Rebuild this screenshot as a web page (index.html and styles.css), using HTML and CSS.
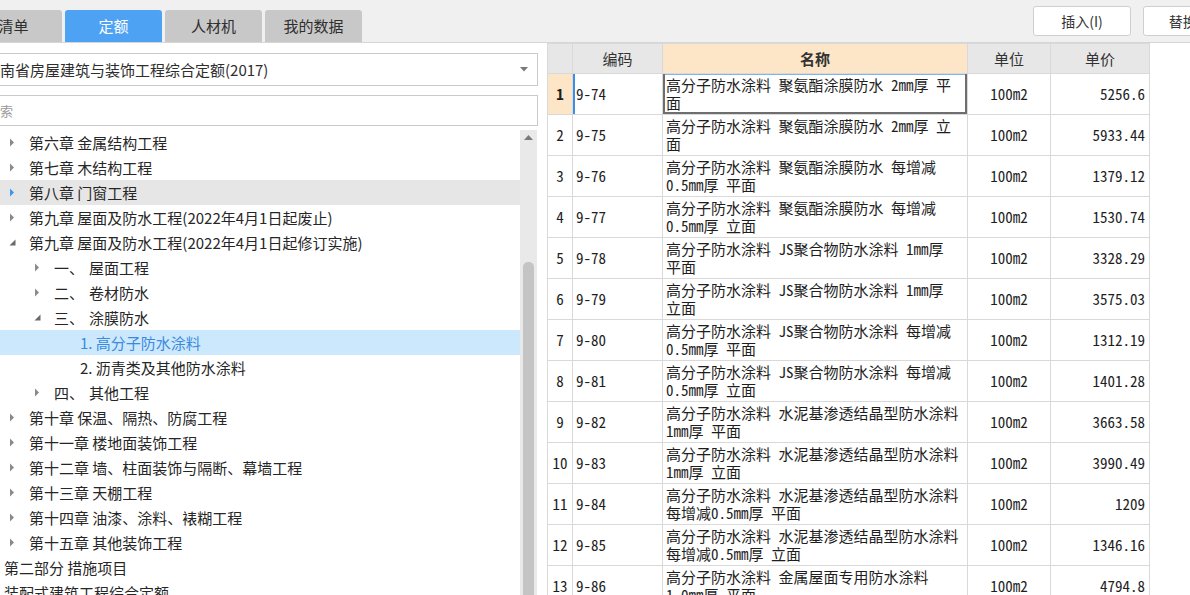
FILE: index.html
```html
<!DOCTYPE html>
<html lang="zh-CN">
<head>
<meta charset="utf-8">
<title>定额</title>
<link rel="stylesheet" href="styles.css">
</head>
<body>
<div class="app">
  <header class="topbar">
    <nav class="tabs">
      <div class="tab">清单</div>
      <div class="tab active">定额</div>
      <div class="tab">人材机</div>
      <div class="tab">我的数据</div>
    </nav>
    <div class="actions">
      <button class="btn">插入(I)</button>
      <button class="btn">替换(R)</button>
    </div>
  </header>
  <main class="main">
    <section class="left">
      <div class="select">
        <span class="select-text">湖南省房屋建筑与装饰工程综合定额(2017)</span>
        <svg class="caret" width="8" height="5" viewBox="0 0 8 5"><path d="M0 0H8L4 4.5Z" fill="#7a7a7a"/></svg>
      </div>
      <div class="search">搜索</div>
      <div class="tree-wrap">
        <ul class="tree">
          <li class="row l1"><span class="tw"><svg width="6" height="9" viewBox="0 0 6 9"><path d="M1 0.5L5 4.5L1 8.5Z" fill="#8a8a8a"/></svg></span>第六章 金属结构工程</li>
          <li class="row l1"><span class="tw"><svg width="6" height="9" viewBox="0 0 6 9"><path d="M1 0.5L5 4.5L1 8.5Z" fill="#8a8a8a"/></svg></span>第七章 木结构工程</li>
          <li class="row l1 hover"><span class="tw"><svg width="6" height="9" viewBox="0 0 6 9"><path d="M1 0.5L5 4.5L1 8.5Z" fill="#3d96f2"/></svg></span>第八章 门窗工程</li>
          <li class="row l1"><span class="tw"><svg width="6" height="9" viewBox="0 0 6 9"><path d="M1 0.5L5 4.5L1 8.5Z" fill="#8a8a8a"/></svg></span>第九章 屋面及防水工程(2022年4月1日起废止)</li>
          <li class="row l1"><span class="tw"><svg width="7" height="7" viewBox="0 0 7 7"><path d="M6.5 0.5V6.5H0.5Z" fill="#6a6a6a"/></svg></span>第九章 屋面及防水工程(2022年4月1日起修订实施)</li>
          <li class="row l2"><span class="tw"><svg width="6" height="9" viewBox="0 0 6 9"><path d="M1 0.5L5 4.5L1 8.5Z" fill="#8a8a8a"/></svg></span><span class="num">一、</span>屋面工程</li>
          <li class="row l2"><span class="tw"><svg width="6" height="9" viewBox="0 0 6 9"><path d="M1 0.5L5 4.5L1 8.5Z" fill="#8a8a8a"/></svg></span><span class="num">二、</span>卷材防水</li>
          <li class="row l2"><span class="tw"><svg width="7" height="7" viewBox="0 0 7 7"><path d="M6.5 0.5V6.5H0.5Z" fill="#6a6a6a"/></svg></span><span class="num">三、</span>涂膜防水</li>
          <li class="row l3 selected"><span class="tw"></span>1. 高分子防水涂料</li>
          <li class="row l3"><span class="tw"></span>2. 沥青类及其他防水涂料</li>
          <li class="row l2"><span class="tw"><svg width="6" height="9" viewBox="0 0 6 9"><path d="M1 0.5L5 4.5L1 8.5Z" fill="#8a8a8a"/></svg></span><span class="num">四、</span>其他工程</li>
          <li class="row l1"><span class="tw"><svg width="6" height="9" viewBox="0 0 6 9"><path d="M1 0.5L5 4.5L1 8.5Z" fill="#8a8a8a"/></svg></span>第十章 保温、隔热、防腐工程</li>
          <li class="row l1"><span class="tw"><svg width="6" height="9" viewBox="0 0 6 9"><path d="M1 0.5L5 4.5L1 8.5Z" fill="#8a8a8a"/></svg></span>第十一章 楼地面装饰工程</li>
          <li class="row l1"><span class="tw"><svg width="6" height="9" viewBox="0 0 6 9"><path d="M1 0.5L5 4.5L1 8.5Z" fill="#8a8a8a"/></svg></span>第十二章 墙、柱面装饰与隔断、幕墙工程</li>
          <li class="row l1"><span class="tw"><svg width="6" height="9" viewBox="0 0 6 9"><path d="M1 0.5L5 4.5L1 8.5Z" fill="#8a8a8a"/></svg></span>第十三章 天棚工程</li>
          <li class="row l1"><span class="tw"><svg width="6" height="9" viewBox="0 0 6 9"><path d="M1 0.5L5 4.5L1 8.5Z" fill="#8a8a8a"/></svg></span>第十四章 油漆、涂料、裱糊工程</li>
          <li class="row l1"><span class="tw"><svg width="6" height="9" viewBox="0 0 6 9"><path d="M1 0.5L5 4.5L1 8.5Z" fill="#8a8a8a"/></svg></span>第十五章 其他装饰工程</li>
          <li class="row l0"><span class="tw"></span>第二部分 措施项目</li>
          <li class="row l0"><span class="tw"></span>装配式建筑工程综合定额</li>
        </ul>
        <div class="scrollbar">
          <svg class="sb-up" width="9" height="5" viewBox="0 0 9 5"><path d="M0 5L4.5 0L9 5Z" fill="#7a7a7a"/></svg>
          <div class="sb-thumb"></div>
        </div>
      </div>
    </section>
    <section class="right">
      <table class="grid">
        <colgroup>
          <col class="c-no"><col class="c-code"><col class="c-name"><col class="c-unit"><col class="c-price">
        </colgroup>
        <thead>
          <tr><th></th><th>编码</th><th class="name-h">名称</th><th>单位</th><th>单价</th></tr>
        </thead>
        <tbody>
          <tr class="current"><td class="no">1</td><td class="code">9-74</td><td class="name">高分子防水涂料 聚氨酯涂膜防水 2mm厚 平<br>面</td><td class="unit">100m2</td><td class="price">5256.6</td></tr>
          <tr><td class="no">2</td><td class="code">9-75</td><td class="name">高分子防水涂料 聚氨酯涂膜防水 2mm厚 立<br>面</td><td class="unit">100m2</td><td class="price">5933.44</td></tr>
          <tr><td class="no">3</td><td class="code">9-76</td><td class="name">高分子防水涂料 聚氨酯涂膜防水 每增减<br>0.5mm厚 平面</td><td class="unit">100m2</td><td class="price">1379.12</td></tr>
          <tr><td class="no">4</td><td class="code">9-77</td><td class="name">高分子防水涂料 聚氨酯涂膜防水 每增减<br>0.5mm厚 立面</td><td class="unit">100m2</td><td class="price">1530.74</td></tr>
          <tr><td class="no">5</td><td class="code">9-78</td><td class="name">高分子防水涂料 JS聚合物防水涂料 1mm厚<br>平面</td><td class="unit">100m2</td><td class="price">3328.29</td></tr>
          <tr><td class="no">6</td><td class="code">9-79</td><td class="name">高分子防水涂料 JS聚合物防水涂料 1mm厚<br>立面</td><td class="unit">100m2</td><td class="price">3575.03</td></tr>
          <tr><td class="no">7</td><td class="code">9-80</td><td class="name">高分子防水涂料 JS聚合物防水涂料 每增减<br>0.5mm厚 平面</td><td class="unit">100m2</td><td class="price">1312.19</td></tr>
          <tr><td class="no">8</td><td class="code">9-81</td><td class="name">高分子防水涂料 JS聚合物防水涂料 每增减<br>0.5mm厚 立面</td><td class="unit">100m2</td><td class="price">1401.28</td></tr>
          <tr><td class="no">9</td><td class="code">9-82</td><td class="name">高分子防水涂料 水泥基渗透结晶型防水涂料<br>1mm厚 平面</td><td class="unit">100m2</td><td class="price">3663.58</td></tr>
          <tr><td class="no">10</td><td class="code">9-83</td><td class="name">高分子防水涂料 水泥基渗透结晶型防水涂料<br>1mm厚 立面</td><td class="unit">100m2</td><td class="price">3990.49</td></tr>
          <tr><td class="no">11</td><td class="code">9-84</td><td class="name">高分子防水涂料 水泥基渗透结晶型防水涂料<br>每增减0.5mm厚 平面</td><td class="unit">100m2</td><td class="price">1209</td></tr>
          <tr><td class="no">12</td><td class="code">9-85</td><td class="name">高分子防水涂料 水泥基渗透结晶型防水涂料<br>每增减0.5mm厚 立面</td><td class="unit">100m2</td><td class="price">1346.16</td></tr>
          <tr><td class="no">13</td><td class="code">9-86</td><td class="name">高分子防水涂料 金属屋面专用防水涂料<br>1.0mm厚 平面</td><td class="unit">100m2</td><td class="price">4794.8</td></tr>
        </tbody>
      </table>
    </section>
  </main>
</div>
</body>
</html>
```

FILE: styles.css
```css
* { box-sizing: border-box; }
html, body { margin: 0; padding: 0; }
body {
  width: 1190px;
  height: 595px;
  overflow: hidden;
  background: #ffffff;
  font-family: "Noto Sans CJK SC", "Microsoft YaHei", sans-serif;
  color: #333333;
}
.app {
  width: 1190px;
  height: 595px;
  display: flex;
  flex-direction: column;
  overflow: hidden;
}

/* top bar */
.topbar {
  flex: none;
  height: 43px;
  display: flex;
  align-items: flex-start;
  background: #f0f0f0;
  border-bottom: 1px solid #d6d6d6;
}
.tabs {
  display: flex;
  gap: 3px;
  margin-left: -35px;
  padding-top: 10px;
}
.tab {
  width: 97px;
  height: 32px;
  background: #c8c8c8;
  border-radius: 3px 3px 0 0;
  display: flex;
  align-items: center;
  justify-content: center;
  font-size: 15px;
  line-height: 20px;
  color: #2e2e2e;
}
.tab.active {
  background: #4ea2f4;
  color: #ffffff;
}
.actions {
  margin-left: auto;
  margin-right: -51px;
  padding-top: 6px;
  display: flex;
  gap: 12px;
}
.btn {
  width: 98px;
  height: 30px;
  padding: 0;
  background: #ffffff;
  border: 1px solid #cfcfcf;
  border-radius: 3px;
  font-family: "Noto Sans CJK SC", sans-serif;
  font-size: 14px;
  color: #333333;
}

/* main */
.main {
  flex: 1;
  min-height: 0;
  display: flex;
}
.left {
  flex: none;
  width: 578px;
  margin-left: -38px;
  display: flex;
  flex-direction: column;
  background: #ffffff;
}
.select {
  flex: none;
  height: 33px;
  margin: 10px 2px 0 18px;
  border: 1px solid #cacaca;
  display: flex;
  align-items: center;
  padding: 0 9px 0 4px;
  font-size: 15px;
  line-height: 20px;
  color: #2e2e2e;
}
.select-text { flex: 1; white-space: nowrap; }
.caret { flex: none; }
.search {
  flex: none;
  height: 31px;
  margin: 9px 2px 0 18px;
  border: 1px solid #cacaca;
  padding: 0 0 0 6px;
  display: flex;
  align-items: center;
  font-size: 13px;
  color: #9a9a9a;
}
.tree-wrap {
  flex: 1;
  min-height: 0;
  margin: 4px 3px 0 0;
  display: flex;
  overflow: hidden;
}
.tree {
  flex: 1;
  list-style: none;
  margin: 0;
  padding: 0;
}
.row {
  height: 25px;
  display: flex;
  align-items: center;
  font-size: 15px;
  line-height: 20px;
  color: #262626;
  white-space: nowrap;
}
.row.l0 { padding-left: 21px; }
.row.l1 { padding-left: 46px; }
.row.l2 { padding-left: 71px; }
.row.l3 { padding-left: 97px; }
.tw {
  flex: none;
  width: 21px;
  display: flex;
  align-items: center;
  padding-left: 1px;
}
.num { margin-right: 5px; }
.row.hover { background: #e6e6e6; }
.row.selected { background: #cce8fc; color: #3a8ae0; }
.scrollbar {
  flex: none;
  width: 17px;
  background: #e9e9e9;
  display: flex;
  flex-direction: column;
  align-items: center;
}
.sb-up { margin-top: 5px; flex: none; }
.sb-thumb {
  flex: 1;
  width: 11px;
  margin-top: 122px;
  margin-bottom: -20px;
  border-radius: 5px;
  background: #c4c4c4;
}

/* right grid */
.right {
  flex: 1;
  min-width: 0;
  padding-left: 7px;
  background: #ffffff;
  overflow: hidden;
}
.grid {
  border-collapse: collapse;
  table-layout: fixed;
  width: 602px;
  font-family: "Noto Sans Mono CJK SC", "Noto Sans CJK SC", monospace;
  font-size: 15px;
  line-height: 18px;
  color: #1e1e1e;
}
.c-no { width: 25px; }
.c-code { width: 90px; }
.c-name { width: 305px; }
.c-unit { width: 83px; }
.c-price { width: 99px; }
.grid th,
.grid td {
  border: 1px solid #d9d9d9;
  padding: 0;
  overflow: hidden;
  white-space: nowrap;
}
.grid th {
  height: 30px;
  background: #e7e7e7;
  font-family: "Noto Sans CJK SC", sans-serif;
  font-weight: normal;
  font-size: 15px;
  color: #333333;
  text-align: center;
}
.grid th.name-h {
  background: #fde5c8;
  font-weight: bold;
}
.grid td { height: 41px; vertical-align: middle; }
.grid td.no { text-align: center; }
.grid td.code { padding-left: 3px; }
.grid td.name { padding-left: 3px; }
.grid td.unit { text-align: center; }
.grid td.price { text-align: right; padding-right: 4px; }
.current td.no { background: #fde5c8; font-weight: bold; }
.current td.code { box-shadow: inset 2px 0 0 #3d8ee6; }
.current td.name {
  box-shadow: inset 2px 0 0 #6e6e6e, inset -2px 0 0 #6e6e6e, inset 0 -2px 0 #6e6e6e, inset 0 1px 0 #7fb5ea;
}
```
